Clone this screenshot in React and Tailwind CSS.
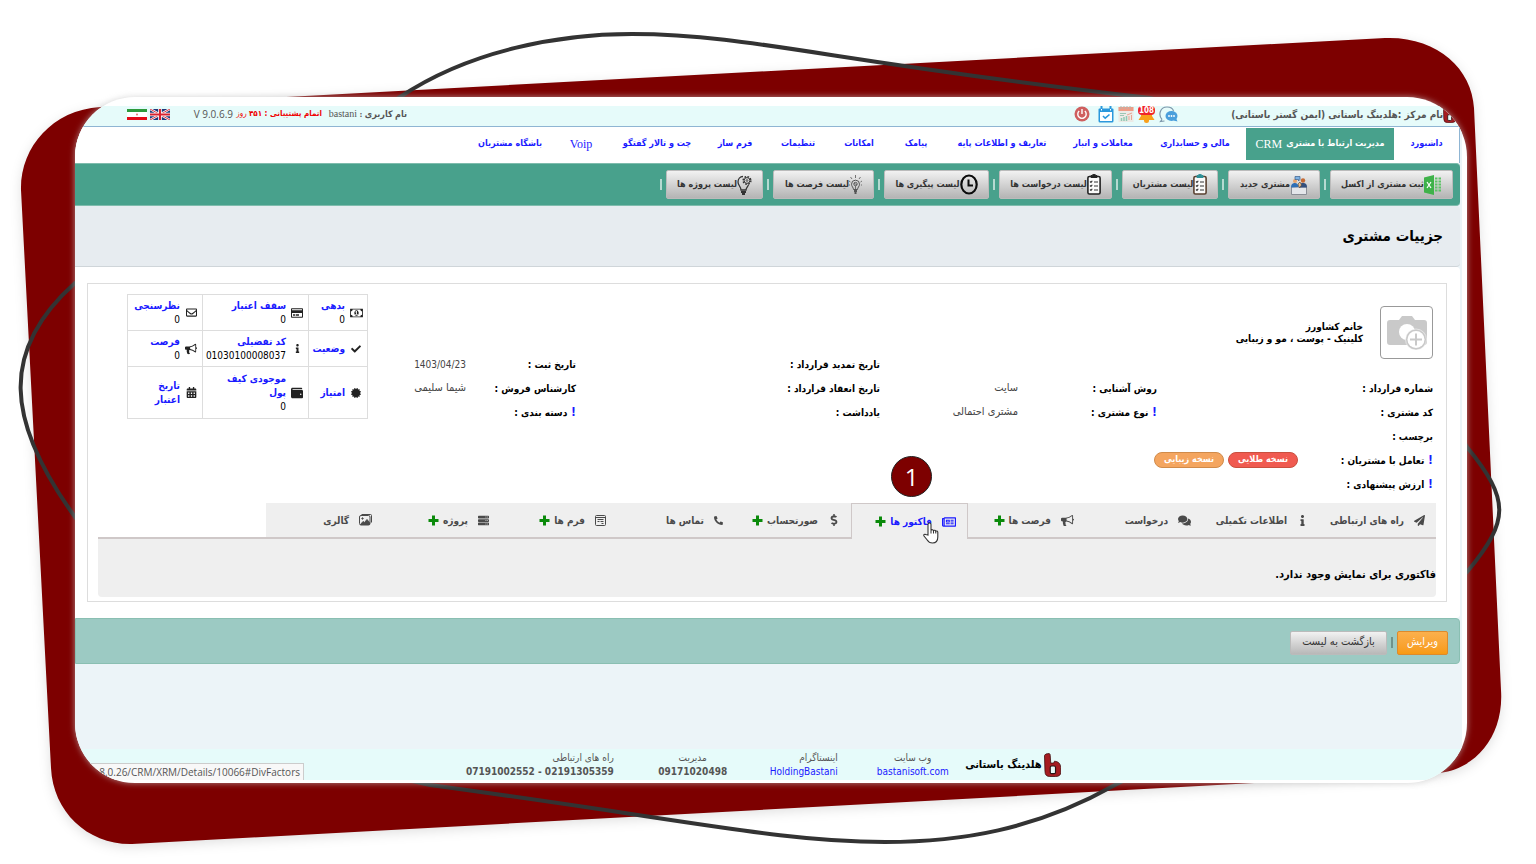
import {
    FaCheck, FaInfo, FaCertificate, FaWallet, FaRegEnvelope, FaRegCreditCard, FaCalendarAlt,
    FaPaperPlane, FaComments, FaRegNewspaper, FaDollarSign, FaPhoneAlt, FaServer
} from "react-icons/fa";

const BullhornIcon = ({ size = 12 }) => (
    <svg width={size} height={size} viewBox="0 0 1792 1792" fill="currentColor">
        <path d="M1664 640q53 0 90.5 37.5t37.5 90.5-37.5 90.5-90.5 37.5v384q0 52-38 90t-90 38q-417-347-812-380-58 19-91 66t-31 100.5 40 92.5q-20 33-23 65.5t6 58 33.5 55 48 50 61.5 50.5q-29 58-111.5 83t-168.5 11.5-132-55.5q-7-23-29.5-87.5t-32-94.5-23-89-15-101 3.5-98.5 22-110.5h-122q-66 0-113-47t-47-113v-192q0-66 47-113t113-47h480q435 0 896-384 52 0 90 38t38 90v384zm-128 604v-954q-394 302-768 343v270q377 42 768 341z" />
    </svg>
);

const MoneyIcon = () => (
    <svg width="13" height="12" viewBox="0 0 1920 1792" fill="currentColor">
        <path d="M768 1152h384v-96h-128v-448h-114l-148 137 77 80q42-37 55-57h2v288h-128v96zm512-256q0 70-21 142t-59.5 134-101.5 101-138 39-138-39-101.5-101-59.5-134-21-142 21-142 59.5-134 101.5-101 138-39 138 39 101.5 101 59.5 134 21 142zm512 256v-512q-106 0-181-75t-75-181h-1152q0 106-75 181t-181 75v512q106 0 181 75t75 181h1152q0-106 75-181t181-75zm128-832v1152q0 26-19 45t-45 19h-1792q-26 0-45-19t-19-45v-1152q0-26 19-45t45-19h1792q26 0 45 19t19 45z" />
    </svg>
);

const PlusIcon = () => (
    <svg className="mr-1" width="11" height="11" viewBox="0 0 11 11" stroke="#0a8a0a" strokeWidth="3">
        <path d="M5.500 0.500v10M0.500 5.500h10" />
    </svg>
);

const FormIcon = () => (
    <svg width="11" height="11" viewBox="0 0 11 11" fill="none" stroke="currentColor">
        <rect x="0.5" y="0.5" width="10" height="10" rx="1" />
        <path d="M1 2.5h9M2.5 4.5h6M2.5 6.5h2M5.5 6.5h3M6.5 8.5h2" />
    </svg>
);

const GalleryIcon = () => (
    <svg width="13" height="12" viewBox="0 0 13 12" fill="none" stroke="currentColor">
        <path d="M2.5 0.5h9a1 1 0 0 1 1 1v7" />
        <rect x="0.5" y="1.5" width="10.5" height="9.5" rx="1.5" />
        <circle cx="3.5" cy="4.5" r="0.7" fill="currentColor" />
        <path d="M1.5 10.5l2.5-3 1.5 1 2.5-3 2.5 3v2z" fill="currentColor" />
    </svg>
);

const LogoIcon = ({ size = 24 }) => (
    <svg className="shrink-0" width={size * 0.72} height={size} viewBox="0 0 18 25">
        <path d="M0.500 2.500 Q1 .5 5.500 0.500 Q6.500 1 6.500 2.500 L7 10.500 L10 10.500 L11 8.500 Q17 9 17.500 15 V20 Q17.500 24.500 12 24.500 H6 Q1 24.500 1 19z" fill="#a51d22" stroke="#3b0a0c" strokeWidth="0.8" />
        <rect x="6.500" y="13.500" width="5.500" height="8" rx="1.500" fill="#e6fbfa" stroke="#2b1414" strokeWidth="1.200" />
    </svg>
);

/* ---- top bar icons ---- */
const ChatIcon = () => (
    <svg width="19" height="17" viewBox="0 0 19 17">
        <path d="M3 13.5C-1 9 1 1 8 1c4 0 6 2 6.500 4" fill="none" stroke="#7d97ab" strokeWidth="1.2" />
        <path d="M3 13.5l-1.500 2 4-.5" fill="none" stroke="#7d97ab" strokeWidth="1.2" />
        <ellipse cx="12.5" cy="10" rx="6" ry="5" fill="#4b9fdc" />
        <path d="M17 12l1.500 3.500-4-1z" fill="#4b9fdc" />
        <circle cx="10" cy="10" r="0.9" fill="#fff" />
        <circle cx="12.5" cy="10" r="0.9" fill="#fff" />
        <circle cx="15" cy="10" r="0.9" fill="#fff" />
    </svg>
);

const ReportIcon = () => (
    <svg width="16" height="16" viewBox="0 0 16 16">
        <rect x="0.5" y="1" width="15" height="15" fill="#eceae6" />
        <rect x="0.5" y="1" width="15" height="4" fill="#ee9c86" />
        <path d="M3 0v3M6 0v3M9 0v3M12 0v3" stroke="#b8b3ad" />
        <path d="M2 7.5h6M2 9.5h4" stroke="#9cc7b4" />
        <path d="M3.5 15v-3M6 15v-4M8.5 15v-5" stroke="#8fc9b3" strokeWidth="1.5" />
        <path d="M9 9l5-2M11 14v-4M13.5 14v-5" stroke="#e7a592" />
    </svg>
);

const CalendarCheckIcon = () => (
    <svg width="16" height="17" viewBox="0 0 16 17">
        <path d="M1.5 2.5h13a1 1 0 0 1 1 1V15a1.500 1.500 0 0 1-1.500 1.500H2A1.500 1.500 0 0 1 .5 15V3.500a1 1 0 0 1 1-1z" fill="#2b98dc" />
        <path d="M3.5 0v4M12.5 0v4" stroke="#2b98dc" strokeWidth="2" />
        <path d="M3.5 3v1.500M12.5 3v1.500" stroke="#fff" />
        <rect x="2" y="6" width="12" height="9" fill="#fff" />
        <path d="M5 10l2.200 2.200L11.500 8.500" fill="none" stroke="#2b98dc" strokeWidth="1.6" />
    </svg>
);

const PowerIcon = () => (
    <svg width="16" height="16" viewBox="0 0 16 16" fill="none">
        <circle cx="8" cy="8" r="7.5" fill="#cf5f5f" />
        <path d="M5.200 5a4.200 4.200 0 1 0 5.600 0M8 3v5" stroke="#fff" strokeWidth="1.4" />
    </svg>
);

const BellIcon = () => (
    <svg width="17" height="18" viewBox="0 0 17 18" fill="#f9a01b">
        <path d="M3 8h11v3l2.500 4h-16L3 11z" />
        <circle cx="8.5" cy="15.5" r="2.5" />
    </svg>
);

const IranFlag = () => (
    <svg width="20" height="11" viewBox="0 0 20 11">
        <rect width="20" height="11" fill="#fff" />
        <rect width="20" height="3" fill="#2c9a3c" />
        <rect y="8" width="20" height="3" fill="#e30a17" />
        <circle cx="10" cy="5.5" r="1" fill="#e57373" />
    </svg>
);

const UkFlag = () => (
    <svg width="20" height="11" viewBox="0 0 20 11">
        <rect width="20" height="11" fill="#1f3a7a" />
        <path d="M0 0l20 11M20 0L0 11" stroke="#fff" strokeWidth="2.4" />
        <path d="M0 0l20 11M20 0L0 11" stroke="#d8222f" strokeWidth="0.9" />
        <path d="M10 0v11M0 5.500h20" stroke="#fff" strokeWidth="3.6" />
        <path d="M10 0v11M0 5.500h20" stroke="#d8222f" strokeWidth="2" />
    </svg>
);

/* ---- toolbar icons ---- */
const ExcelIcon = () => (
    <svg className="shrink-0" width="18" height="20" viewBox="0 0 18 20">
        <path d="M0 2.500L10 0v20L0 17.500z" fill="#3fb24a" />
        <path d="M3 7l4 6M7 7l-4 6" stroke="#fff" strokeWidth="1.2" />
        <path d="M11 3.500h2.500M14.500 3.500H17M11 6.500h2.500M14.500 6.500H17M11 9.500h2.500M14.500 9.500H17M11 12.500h2.500M14.500 12.500H17M11 15.500h2.500M14.500 15.500H17" stroke="#5cc466" strokeWidth="2" />
    </svg>
);

const NewCustomerIcon = () => (
    <svg className="shrink-0" width="18" height="20" viewBox="0 0 18 20">
        <path d="M1.500 12h15v7.500h-15z" fill="#e4e6ea" stroke="#8b8e96" />
        <path d="M1 12.500C1 9 3 8 5 8s3 1 3.500 4z" fill="#2f6fb5" />
        <path d="M9 12.500c0-3.500 1.500-4.500 4-4.500s4 1 4 4.500z" fill="#34507e" />
        <circle cx="5" cy="6" r="2" fill="#e9a36a" />
        <circle cx="13" cy="5.5" r="2.2" fill="#c66a34" />
        <path d="M5 1.500h5v3l-1.500 1.500v-1.500H5z" fill="#7fb2e3" stroke="#3b5e8b" strokeWidth="0.7" />
        <path d="M8 9l2-2 1.500 3-2 3z" fill="#f1c58e" stroke="#4b3a2f" strokeWidth="0.6" />
    </svg>
);

const ClipboardIcon = ({ board = "#222", clip = "#222" }) => (
    <svg className="shrink-0" width="14" height="21" viewBox="0 0 14 21" fill="none">
        <rect x="0.9" y="2.5" width="12.2" height="17.5" rx="1.5" fill="#fafafa" stroke={board} strokeWidth="1.6" />
        <path d="M4 3.500h6v-2H8.500a1.500 1.500 0 0 0-3 0H4z" fill={clip} stroke={clip} />
        <path d="M3 7.500l1 1 1.300-1.800M3 11.500l1 1 1.300-1.800M3 15.500l1 1 1.300-1.800M7 8h4M7 12h4M7 16h4" stroke="#333" strokeWidth="1.1" />
    </svg>
);

const ClockIcon = () => (
    <svg className="shrink-0" width="18" height="21" viewBox="0 0 18 21" fill="none" stroke="#0b0b0b">
        <ellipse cx="9" cy="10.5" rx="7.7" ry="9" strokeWidth="2.2" />
        <path d="M8.500 5.500v6h4.500" strokeWidth="2" />
    </svg>
);

const IdeaIcon = () => (
    <svg className="shrink-0" width="13" height="20" viewBox="0 0 13 20" fill="none" stroke="#555">
        <path d="M4.500 14.500c0-2-2-3-2-5.300a4 4 0 0 1 8 0c0 2.300-2 3.300-2 5.300z" />
        <path d="M5 16h3M5.500 18h2" strokeWidth="1.6" stroke="#333" />
        <path d="M6.500 0v3M1.500 2l1.500 2M11.500 2L10 4M0 6l1.500 1M13 6l-1.500 1M0 10h1M12 10h1" strokeWidth="0.8" />
        <circle cx="6.5" cy="9" r="1.7" />
        <path d="M6.500 11v3M5 8l3 2" strokeWidth="0.8" />
    </svg>
);

const ProjectIcon = () => (
    <svg className="shrink-0" width="15" height="20" viewBox="0 0 15 20" fill="none" stroke="#333">
        <path d="M6 1.500C3 1.500 1 4 1 7c0 3.500 3 4.500 3 8h5c0-2 1.500-3 2.500-5" strokeWidth="1.3" />
        <path d="M4 17h5M5 19h3" strokeWidth="1.8" />
        <circle cx="10" cy="5.5" r="3.9" strokeWidth="1.4" strokeDasharray="1.700 1.360" />
        <circle cx="10" cy="5.5" r="2.9" strokeWidth="1" />
        <circle cx="10" cy="5.5" r="0.9" strokeWidth="0.8" />
    </svg>
);

const CameraIcon = () => (
    <svg width="40" height="36" viewBox="0 0 40 36">
        <path d="M3 5h9l3-4h10l3 4h9a3 3 0 0 1 3 3v19a3 3 0 0 1-3 3H3a3 3 0 0 1-3-3V8a3 3 0 0 1 3-3z" fill="#c9c9c9" />
        <circle cx="20" cy="17" r="8" fill="#fff" />
        <circle cx="29" cy="24.5" r="10.5" fill="#c9c9c9" stroke="#fff" strokeWidth="0.5" />
        <circle cx="29" cy="24.5" r="8.5" fill="#fff" />
        <path d="M29 18.500v12M23 24.500h12" stroke="#c9c9c9" strokeWidth="2" />
    </svg>
);

const HandCursor = () => (
    <svg width="16" height="22" viewBox="0 0 16 22">
        <path d="M5 13V2.500a1.500 1.500 0 0 1 3 0V8.500c.5-1.300 2.400-1 2.500.3.600-1 2.200-.7 2.300.6.700-.8 2-.3 2 .9V15c0 3.500-2 6-5.300 6-3 0-4.300-1.300-5.500-3.300L1 14c-.7-1.300.6-2.300 1.800-1.500z" fill="#fff" stroke="#333" strokeWidth="1.1" />
        <path d="M8 8.500v3M10.500 9v2.500M12.800 9.500v2" stroke="#333" />
    </svg>
);

const navItems = [
    { name: "داشبورد", width: "w-[65px]" },
    { name: "مدیریت ارتباط با مشتری", latin: "CRM", width: "w-[148px]", active: true },
    { name: "مالی و حسابداری", width: "w-[102px]" },
    { name: "معاملات و انبار", width: "w-[82px]" },
    { name: "تعاریف و اطلاعات پایه", width: "w-[120px]" },
    { name: "پیامک", width: "w-[52px]" },
    { name: "امکانات", width: "w-[62px]" },
    { name: "تنظیمات", width: "w-[60px]" },
    { name: "فرم ساز", width: "w-[66px]" },
    { name: "چت و تالار گفتگو", width: "w-[90px]" },
    { latin: "Voip", width: "w-[62px]" },
    { name: "باشگاه مشتریان", width: "w-20" },
];

const toolbarItems = [
    { name: "ثبت مشتری از اکسل", icon: <ExcelIcon />, width: "w-[123px]" },
    { name: "مشتری جدید", icon: <NewCustomerIcon />, width: "w-[92px]" },
    { name: "لیست مشتریان", icon: <ClipboardIcon board="#5a4030" clip="#2d8f96" />, width: "w-[96px]" },
    { name: "لیست درخواست ها", icon: <ClipboardIcon />, width: "w-[113px]" },
    { name: "لیست پیگیری ها", icon: <ClockIcon />, width: "w-[105px]" },
    { name: "لیست فرصت ها", icon: <IdeaIcon />, width: "w-[101px]" },
    { name: "لیست پروژه ها", icon: <ProjectIcon />, width: "w-[97px]" },
];

const stats = [
    [
        { icon: <MoneyIcon />, title: "بدهی", value: "0" },
        { icon: <FaRegCreditCard size={12} />, title: "سقف اعتبار", value: "0" },
        { icon: <FaRegEnvelope size={11} />, title: "نظرسنجی", value: "0" },
    ],
    [
        { icon: <FaCheck size={10} />, title: "وضعیت" },
        { icon: <FaInfo size={9} />, title: "کد تفضیلی", value: "01030100008037" },
        { icon: <BullhornIcon />, title: "فرصت", value: "0" },
    ],
    [
        { icon: <FaCertificate size={10} />, title: "امتیاز" },
        { icon: <FaWallet size={12} />, title: "موجودی کیف\nپول", value: "0" },
        { icon: <FaCalendarAlt size={11} />, title: "تاریخ\nاعتبار" },
    ],
];

const tabs = [
    { name: "راه های ارتباطی", icon: <FaPaperPlane size={11} /> },
    { name: "اطلاعات تکمیلی", icon: <FaInfo size={11} /> },
    { name: "درخواست", icon: <FaComments size={13} /> },
    { name: "فرصت ها", icon: <BullhornIcon size={13} />, add: true },
    { name: "فاکتور ها", icon: <FaRegNewspaper size={14} />, add: true, active: true },
    { name: "صورتحساب", icon: <FaDollarSign size={12} />, add: true },
    { name: "تماس ها", icon: <FaPhoneAlt size={9} /> },
    { name: "فرم ها", icon: <FormIcon />, add: true },
    { name: "پروژه", icon: <FaServer size={11} />, add: true },
    { name: "گالری", icon: <GalleryIcon /> },
];

const Field = ({ label, labelWidth, mark, children }) => (
    <div className="flex h-6 items-center whitespace-nowrap">
        <dt className={`${labelWidth} shrink-0 text-[10px] font-bold text-black`}>
            {mark && <span className="text-[12px] text-[#1a1aff]">! </span>}
            {label} :
        </dt>
        <dd className="flex gap-1 text-[11px] text-[#444]">{children}</dd>
    </div>
);

const Backdrop = () => (
    <svg className="absolute inset-0 h-full w-full" viewBox="0 0 1536 864" preserveAspectRatio="none" fill="none">
        <path
            className="drop-shadow-[0_3px_6px_rgba(0,0,0,0.12)]"
            d="M100 107L1385 38C1436 36 1472 68 1474 108L1501 690C1504 734 1478 768 1440 773L132 844C88 845 53 812 51 768L21 190C20 148 52 110 100 107z"
            fill="#7d0000"
        />
        <path
            d="M400 97C470 50 560 34 632 34C750 34 830 62 1150 98C1330 140 1380 300 1467 447C1510 500 1510 520 1467 572C1350 700 1200 740 1115 785C1035 830 960 842 885 842C780 842 690 820 430 785C250 750 150 620 75 517C5 420 0 350 75 283C190 200 290 170 400 97z"
            stroke="#333"
            strokeWidth="4"
        />
    </svg>
);

const App = () => {
    return (
        <div className="relative flex min-h-screen flex-col overflow-hidden bg-white pt-[97px] pr-[69px] pb-[81px] pl-[75px] font-['DejaVu_Sans_Condensed','DejaVu_Sans',sans-serif]">
            <Backdrop />

            <div dir="rtl" className="relative flex flex-1 flex-col overflow-hidden rounded-[60px] bg-white pt-[9px] pr-[5px] pb-[3px] shadow-[0_0_6px_rgba(200,200,200,0.7)]">
                {/* Top bar */}
                <header className="flex h-[21px] items-center border-b border-[#8fb5d3] bg-[#e6fbfa] pr-[6px] pb-1 pl-[52px] text-[10px] whitespace-nowrap text-[#555]">
                    <LogoIcon size={18} />
                    <div className="w-[265px] font-bold">نام مرکز :هلدینگ باستانی (ایمن گستر باستانی)</div>
                    <div className="flex items-center gap-1">
                        <button aria-label="پیام ها"><ChatIcon /></button>
                        <button aria-label="اعلان ها" className="relative">
                            <BellIcon />
                            <span className="absolute top-px right-0 w-full rounded-sm bg-[#f0252b] text-center text-[8px] leading-[9px] font-bold text-white">108</span>
                        </button>
                        <button aria-label="گزارش"><ReportIcon /></button>
                        <button aria-label="تقویم"><CalendarCheckIcon /></button>
                        <button aria-label="خروج" className="mr-1"><PowerIcon /></button>
                    </div>
                    <div className="mr-auto flex items-center">
                        <div className="w-[85px] font-['Liberation_Serif','DejaVu_Sans_Condensed',serif]"><b className="text-[9px]">نام کاربری :</b> bastani</div>
                        <div className="w-[89px] text-[8px] text-[#f00000]"><b>اتمام پشتیبانی : ۴۵۱</b> روز</div>
                        <div className="w-[63px] font-['Open_Sans',sans-serif]"><bdi dir="ltr">V 9.0.6.9</bdi></div>
                        <a href="#en" aria-label="English"><UkFlag /></a>
                        <a href="#fa" aria-label="فارسی" className="mr-[3px]"><IranFlag /></a>
                    </div>
                </header>

                <div className="flex flex-1 flex-col bg-[#ecf4f8] pr-[2px]">
                    {/* Main menu */}
                    <nav className="flex h-9 border-r border-[#8fb5d3] bg-white pt-px pb-[3px] text-[9px] font-bold whitespace-nowrap text-[#1a1aff]">
                        {navItems.map((item) => (
                            <a
                                key={item.name || item.latin}
                                href="#"
                                className={`${item.width} flex items-center justify-center gap-1 ${item.active ? "bg-[#48a18c] text-white" : ""}`}
                            >
                                {item.name}
                                {item.latin && <span className="font-['Liberation_Serif',serif] text-[12px] font-normal">{item.latin}</span>}
                            </a>
                        ))}
                    </nav>

                    {/* Toolbar */}
                    <div className="flex h-[43px] items-center rounded-r-sm border-y border-[#7fbcad] bg-[#48a18c] pr-[7px]">
                        {toolbarItems.map((item) => (
                            <div key={item.name} className="flex items-center">
                                <button className={`${item.width} flex h-[29px] items-center justify-center rounded-xs border border-[#bbb] bg-linear-to-b from-[#f2f2f2] to-[#b4b4b4] text-[9px] font-bold whitespace-nowrap text-[#333]`}>
                                    {item.icon}
                                    {item.name}
                                </button>
                                <span className="mx-1 h-[11px] w-[2px] bg-[#b5dad1]" />
                            </div>
                        ))}
                    </div>

                    <div className="flex h-[61px] items-center rounded-r-sm border-b border-[#cfd5d9] bg-[#e7ecf0] pr-[17px]">
                        <h1 className="text-[15px] font-bold text-black">جزییات مشتری</h1>
                    </div>

                    {/* Customer details */}
                    <main className="rounded-r-sm bg-white py-4 pr-[13px] pl-[12px]">
                        <div className="border border-[#ddd] px-[10px] pb-1">
                            <div className="grid grid-cols-[279fr_277fr_304fr_208fr_270fr]">
                                <div className="min-w-0 pt-[22px] pr-[3px]">
                                    <div className="mb-[17px] flex items-center gap-[17px]">
                                        <button aria-label="تصویر مشتری" className="flex h-[53px] w-[53px] items-center justify-center rounded-sm border border-[#999] bg-white">
                                            <CameraIcon />
                                        </button>
                                        <div className="text-[10px] leading-[12px] font-bold whitespace-nowrap text-black">
                                            <div>خانم کشاورز</div>
                                            <div>کلینیک - پوست ، مو و زیبایی</div>
                                        </div>
                                    </div>
                                    <dl>
                                        <Field label="شماره قرارداد" labelWidth="w-[135px]" />
                                        <Field label="کد مشتری" labelWidth="w-[135px]" />
                                        <Field label="برچسب" labelWidth="w-[135px]" />
                                        <Field label="تعامل با مشتریان" labelWidth="w-[135px]" mark>
                                            <span className="flex h-4 w-[70px] items-center justify-center rounded-lg border border-[#c9503f] bg-[#f05a50] text-[9px] font-bold text-white">نسخه طلایی</span>
                                            <span className="flex h-4 w-[70px] items-center justify-center rounded-lg border border-[#d08b4a] bg-[#f4a55f] text-[9px] font-bold text-white">نسخه زیبایی</span>
                                        </Field>
                                        <Field label="ارزش پیشنهادی" labelWidth="w-[135px]" mark />
                                    </dl>
                                </div>

                                <dl className="pt-[92px]">
                                    <Field label="روش آشنایی" labelWidth="w-[139px]">سایت</Field>
                                    <Field label="نوع مشتری" labelWidth="w-[139px]" mark>مشتری احتمالی</Field>
                                </dl>

                                <dl className="pt-[68px]">
                                    <Field label="تاریخ تمدید قرارداد" labelWidth="w-[139px]" />
                                    <Field label="تاریخ انعقاد قرارداد" labelWidth="w-[139px]" />
                                    <Field label="یادداشت" labelWidth="w-[139px]" />
                                </dl>

                                <dl className="pt-[68px]">
                                    <Field label="تاریخ ثبت" labelWidth="w-[110px]"><span className="text-[10px]">1403/04/23</span></Field>
                                    <Field label="کارشناس فروش" labelWidth="w-[110px]">شیما سلیمی</Field>
                                    <Field label="دسته بندی" labelWidth="w-[110px]" mark />
                                </dl>

                                <div className="pt-[10px]">
                                    <table className="w-[241px] table-fixed border-collapse text-[10px] leading-[14px]">
                                        <colgroup>
                                            <col className="w-[59px]" />
                                            <col className="w-[106px]" />
                                            <col className="w-[75px]" />
                                        </colgroup>
                                        <tbody>
                                            {stats.map((row, i) => (
                                                <tr key={i} className={i === 2 ? "h-[52px]" : "h-9"}>
                                                    {row.map((cell) => (
                                                        <td key={cell.title} className="border border-[#ddd] p-0 pr-1">
                                                            <div className="flex items-center gap-1">
                                                                <span className="flex w-[14px] shrink-0 justify-center text-[#222]">{cell.icon}</span>
                                                                <div>
                                                                    <a href="#" className="block font-bold whitespace-pre-line text-[#1a1aff]">{cell.title}</a>
                                                                    {cell.value && <div>{cell.value}</div>}
                                                                </div>
                                                            </div>
                                                        </td>
                                                    ))}
                                                </tr>
                                            ))}
                                        </tbody>
                                    </table>
                                </div>
                            </div>

                            {/* Tabs */}
                            <div role="tablist" className="mt-[7px] flex whitespace-nowrap">
                                {tabs.map((tab) => (
                                    <button
                                        key={tab.name}
                                        role="tab"
                                        aria-selected={!!tab.active}
                                        className={`relative flex h-9 w-[117px] shrink-0 items-center bg-[#efefef] pr-[11px] text-[10px] font-bold ${
                                            tab.active ? "border border-b-0 border-[#cfc8c8] text-[#1a1aff]" : "border-b-2 border-[#cfc8c8] text-[#4a4a4a]"
                                        }`}
                                    >
                                        {tab.icon}
                                        <span className="mr-[10px]">{tab.name}</span>
                                        {tab.add && <PlusIcon />}
                                        {tab.active && (
                                            <>
                                                <span className="absolute -top-12 left-[39px] flex h-[41px] w-[41px] items-center justify-center rounded-full border border-[#222] bg-[#7d0000] font-['Open_Sans',sans-serif] text-[24px] font-normal text-white">1</span>
                                                <span className="absolute top-[18px] left-[71px]"><HandCursor /></span>
                                            </>
                                        )}
                                    </button>
                                ))}
                                <div className="flex-1 border-b-2 border-[#cfc8c8]" />
                            </div>
                            <div role="tabpanel" className="flex h-[58px] items-center rounded-b-sm bg-[#efefef] pt-[14px] text-[11px] font-bold text-black">
                                فاکتوری برای نمایش وجود ندارد.
                            </div>
                        </div>
                    </main>

                    {/* Actions */}
                    <div className="flex h-[46px] items-center rounded-r-sm border border-[#8abfb2] bg-[#9ccac3] pt-[3px] pr-[11px] text-[11px]">
                        <button className="h-6 w-[51px] rounded-xs border border-[#dd8a2c] bg-linear-to-b from-[#fbb04c] to-[#f89a10] text-white">ویرایش</button>
                        <span className="mx-1 h-[11px] w-[2px] bg-[#6f938c]" />
                        <button className="h-6 w-[97px] rounded-xs border border-[#bbb] bg-linear-to-b from-[#f2f2f2] to-[#b8b8b8] text-[#333]">بازگشت به لیست</button>
                    </div>
                </div>

                {/* Footer */}
                <footer className="relative flex h-[31px] items-center bg-[#e6fbfa] pr-[401px] text-[10px] leading-[14px] whitespace-nowrap text-[#555]">
                    <LogoIcon size={24} />
                    <div className="mr-[2px] w-[78px] text-[11px] font-bold text-black">هلدینگ باستانی</div>
                    <div className="mr-3 w-[78px] text-center">
                        <div>وب سایت</div>
                        <a href="#" className="text-[#1a1aff]">bastanisoft.com</a>
                    </div>
                    <div className="mr-9 w-[78px]">
                        <div>اینستاگرام</div>
                        <a href="#" className="text-[#1a1aff]">HoldingBastani</a>
                    </div>
                    <div className="mr-8 w-[70px] text-center">
                        <div>مدیریت</div>
                        <b>09171020498</b>
                    </div>
                    <div className="mr-11">
                        <div>راه های ارتباطی</div>
                        <b dir="ltr">07191002552 - 02191305359</b>
                    </div>
                    <div dir="ltr" className="absolute bottom-0 left-0 w-[229px] border-t border-r border-[#ccc] bg-[#f8f8f8] pr-[3px] text-right font-['Open_Sans',sans-serif] text-[10px] leading-4">
                        8.0.26/CRM/XRM/Details/10066#DivFactors
                    </div>
                </footer>
            </div>
        </div>
    );
};

export default App;
